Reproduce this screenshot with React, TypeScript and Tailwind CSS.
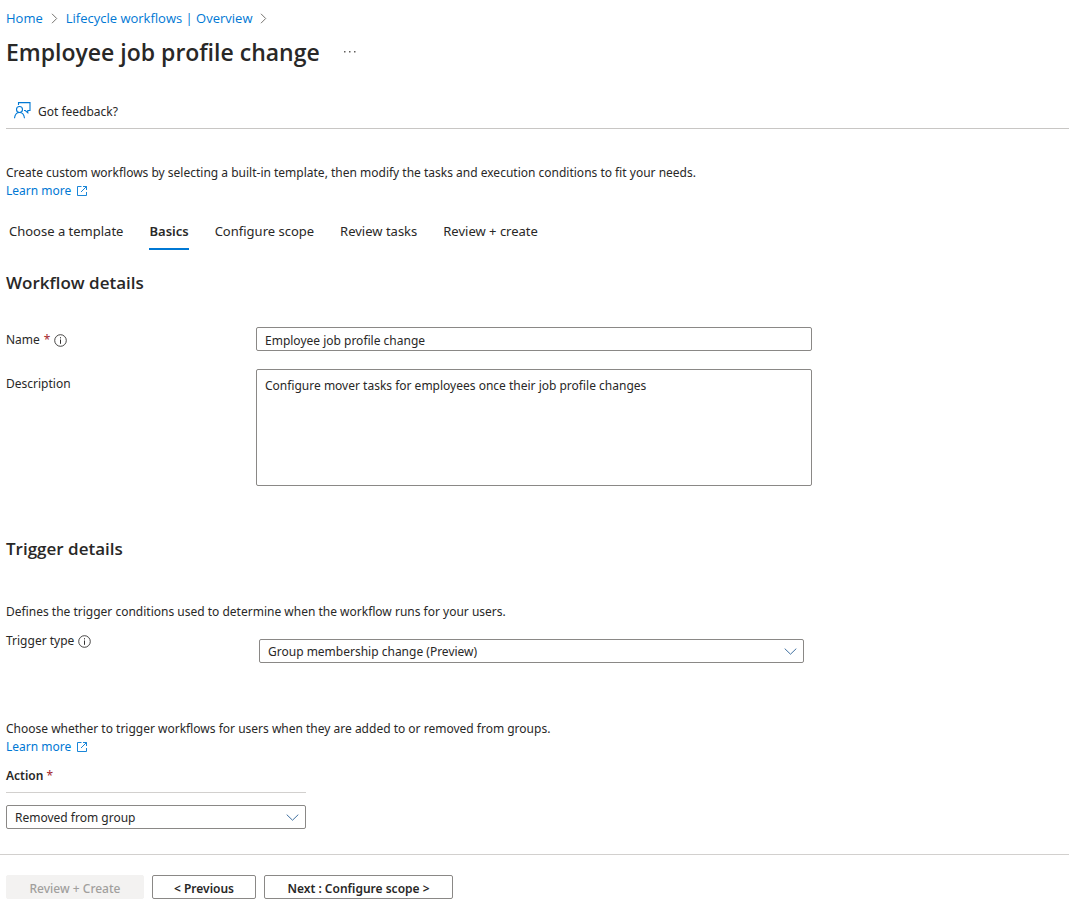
import { useState, type ReactNode } from "react";

function ExternalIcon() {
  return (
    <svg className="size-[11px] shrink-0" viewBox="0 0 11 11" fill="none" stroke="#0078d4" strokeWidth="0.9" aria-hidden="true">
      <path d="M4.500.5H.5v9h9V6" />
      <path d="M6 .5h3.500V4M9.500.5 4 6" />
    </svg>
  );
}

function InfoIcon() {
  return (
    <svg className="size-[13px] shrink-0" viewBox="0 0 13 13" fill="none" stroke="#323130" aria-hidden="true">
      <circle cx="6.5" cy="6.5" r="5.8" strokeWidth="0.9" />
      <path d="M6.5 5.5v4.3M6.5 3.2v1.2" />
    </svg>
  );
}

function CrumbArrow() {
  return (
    <svg className="h-[11px] w-[7px] shrink-0" viewBox="0 0 7 11" fill="none" stroke="#75736f" aria-hidden="true">
      <path d="M1 .8 5.7 5.5 1 10.2" />
    </svg>
  );
}

function FeedbackIcon() {
  return (
    <svg className="size-[17px] shrink-0" viewBox="0 0 17 17" fill="none" stroke="#0078d4" strokeWidth="1.100" aria-hidden="true">
      <path d="M4.500 3V.6h11.500v7.900h-2.200v2.300l-2.500-2.300H10" />
      <circle cx="5.500" cy="7.500" r="3" />
      <path d="M.5 16.200c.4-3.300 2.300-5.700 5-5.700s4.600 2.400 5 5.700" />
    </svg>
  );
}

function LearnMore() {
  return (
    <a href="#learn-more" className="flex w-fit items-center gap-[6px] text-[#0078d4]">
      Learn more
      <ExternalIcon />
    </a>
  );
}

function Dropdown({ id, value, options }: { id: string; value: string; options: string[] }) {
  const [current, setCurrent] = useState(value);
  return (
    <div className="relative">
      <select
        id={id}
        value={current}
        onChange={(e) => setCurrent(e.target.value)}
        className="block h-6 w-full appearance-none rounded-xs border border-[#8a8886] bg-white pt-0.5 pr-8 pl-2"
      >
        {options.map((o) => (
          <option key={o}>{o}</option>
        ))}
      </select>
      <svg
        className="pointer-events-none absolute top-[9px] right-[7px] h-[7px] w-[13px]"
        viewBox="0 0 13 7"
        fill="none"
        stroke="#3f6f9f"
        aria-hidden="true"
      >
        <path d="M.7.6 6.500 6.200 12.300.6" />
      </svg>
    </div>
  );
}

function FooterButton({ children, className, disabled }: { children: ReactNode; className: string; disabled?: boolean }) {
  return (
    <button
      type="button"
      disabled={disabled}
      className={
        "h-6 rounded-xs border pt-1 leading-[18px] whitespace-nowrap " +
        (disabled
          ? "border-[#f3f2f1] bg-[#f3f2f1] font-medium text-[#a19f9d] "
          : "border-[#8a8886] bg-white font-semibold ") +
        className
      }
    >
      {children}
    </button>
  );
}

const tabs = ["Choose a template", "Basics", "Configure scope", "Review tasks", "Review + create"];

export default function App() {
  const [active, setActive] = useState("Basics");
  return (
    <div className="bg-white font-['Noto_Sans','Open_Sans',sans-serif] text-[12px] leading-[18px] text-[#292827]">
      <main className="pt-2 pl-[6px]">
        <nav
          aria-label="Breadcrumb"
          className="flex items-center gap-2 font-['Open_Sans','Noto_Sans',sans-serif] text-[13px] leading-5 text-[#0078d4]"
        >
          <a href="#home">Home</a>
          <CrumbArrow />
          <a href="#overview">Lifecycle workflows | Overview</a>
          <CrumbArrow />
        </nav>

        <header className="mt-2 flex items-center gap-6">
          <h1 className="font-['Open_Sans','Noto_Sans',sans-serif] text-[23px] leading-8 font-semibold">
            Employee job profile change
          </h1>
          <button type="button" aria-label="More actions">
            <svg className="h-[2px] w-[12px]" viewBox="0 0 12 2" fill="#605e5c">
              <path d="M0 0h1.500v1.500H0zM5 0h1.500v1.500H5zM10 0h1.500v1.500H10z" />
            </svg>
          </button>
        </header>

        <div className="mt-6 mr-px flex h-[37px] items-center border-b border-[#c8c6c4] pl-2">
          <button type="button" className="flex items-center gap-[7px]">
            <FeedbackIcon />
            <span className="pt-[3px]">Got feedback?</span>
          </button>
        </div>

        <div className="mt-[35px]">
          <p>
            Create custom workflows by selecting a built-in template, then modify the tasks and execution conditions to
            fit your needs.
          </p>
          <LearnMore />
        </div>

        <div role="tablist" className="mt-[19px] flex gap-[26px] pl-[3px] text-[13px]">
          {tabs.map((tab) => (
            <button
              key={tab}
              type="button"
              role="tab"
              aria-selected={tab === active}
              onClick={() => setActive(tab)}
              className={
                "border-b-2 pb-[5px] leading-6 " +
                (tab === active ? "border-[#0078d4] font-semibold" : "border-transparent")
              }
            >
              {tab}
            </button>
          ))}
        </div>

        <section>
          <h2 className="mt-[21px] font-['Open_Sans','Noto_Sans',sans-serif] text-[17px] leading-6 font-semibold">
            Workflow details
          </h2>
          <div className="mt-8 grid grid-cols-[250px_minmax(0,556px)] gap-y-4">
            <label htmlFor="name" className="flex items-center gap-1 leading-[26px]">
              Name <span className="text-[#a4262c]">*</span>
              <InfoIcon />
            </label>
            <input
              id="name"
              defaultValue="Employee job profile change"
              className="h-6 rounded-xs border border-[#8a8886] px-2 pt-[3px]"
            />
            <label htmlFor="description" className="leading-[30px]">
              Description
            </label>
            <textarea
              id="description"
              defaultValue="Configure mover tasks for employees once their job profile changes"
              className="h-[117px] resize-none rounded-xs border border-[#8a8886] px-2 py-[7px]"
            />
          </div>
        </section>

        <section>
          <h2 className="mt-[51px] font-['Open_Sans','Noto_Sans',sans-serif] text-[17px] leading-6 font-semibold">
            Trigger details
          </h2>
          <p className="mt-[42px]">
            Defines the trigger conditions used to determine when the workflow runs for your users.
          </p>
          <div className="mt-[11px] grid grid-cols-[253px_minmax(0,545px)]">
            <label htmlFor="trigger" className="flex items-center gap-1 self-start">
              Trigger type
              <InfoIcon />
            </label>
            <div className="pt-[7px]">
              <Dropdown
                id="trigger"
                value="Group membership change (Preview)"
                options={["Group membership change (Preview)", "Attribute changes (Preview)", "On-demand only"]}
              />
            </div>
          </div>
        </section>

        <section className="mt-[57px]">
          <p>Choose whether to trigger workflows for users when they are added to or removed from groups.</p>
          <LearnMore />
          <div className="mt-[11px] max-w-[300px]">
            <label htmlFor="action" className="block border-b border-[#d2d0ce] pb-[7px] font-semibold">
              Action <span className="font-normal text-[#a4262c]">*</span>
            </label>
            <div className="mt-3">
              <Dropdown id="action" value="Removed from group" options={["Removed from group", "Added to group"]} />
            </div>
          </div>
        </section>
      </main>

      <footer className="mt-[25px] mr-px flex gap-2 border-t border-[#d2d0ce] pt-5 pb-5 pl-[6px]">
        <FooterButton disabled className="w-[138px]">
          Review + Create
        </FooterButton>
        <FooterButton className="w-[104px]">&lt; Previous</FooterButton>
        <FooterButton className="w-[189px]">Next : Configure scope &gt;</FooterButton>
      </footer>
    </div>
  );
}
